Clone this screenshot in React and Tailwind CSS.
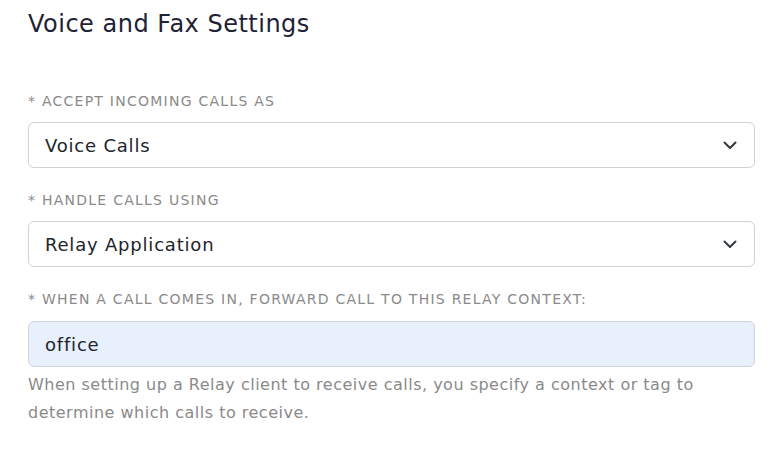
import { useState } from "react";

const font = { fontFamily: '"DejaVu Sans", sans-serif' };

function Chevron() {
  return (
    <svg width="16" height="16" viewBox="0 0 16 16" className="text-[#343a40]">
      <path d="M2.5 5.5l5.5 5.5 5.5-5.5" fill="none" stroke="currentColor" strokeWidth="2" strokeLinecap="round" strokeLinejoin="round" />
    </svg>
  );
}

function Label({ children, className = "" }) {
  return (
    <div className={`h-[21px] text-[14px] leading-[21px] tracking-[1.25px] text-[#8a8a8a] uppercase ${className}`}>
      {children}
    </div>
  );
}

function Field({ label, children }) {
  return (
    <div className="mb-[22px]">
      <Label className="mb-[10px]">{label}</Label>
      {children}
    </div>
  );
}

function Select({ value }) {
  return (
    <div className="h-[46px] flex items-center justify-between px-[16px] border border-[#ced4da] rounded-[6px] bg-white text-[18px] tracking-[0.8px] text-[#212529]">
      <span>{value}</span>
      <Chevron />
    </div>
  );
}

export default function App() {
  const [context, setContext] = useState("office");

  return (
    <div className="w-[775px] h-[459px] bg-white pl-[28px] pr-[20px] pt-[6px] overflow-hidden" style={font}>
      <h2 className="text-[24px] leading-[36px] tracking-[0.5px] text-[#1e2235] mb-[49px]">Voice and Fax Settings</h2>

      <Field label="* Accept incoming calls as">
        <Select value="Voice Calls" />
      </Field>

      <Field label="* Handle calls using">
        <Select value="Relay Application" />
      </Field>

      <div>
        <Label className="mb-[11px]">* When a call comes in, forward call to this relay context:</Label>
        <input
          value={context}
          onChange={(e) => setContext(e.target.value)}
          className="w-full h-[46px] px-[16px] border border-[#ced4da] rounded-[6px] bg-[#e8f0fe] text-[18px] tracking-[0.8px] text-[#212529] outline-none"
          style={font}
        />
        <p className="mt-[4px] text-[16px] leading-[28px] tracking-[0.5px] text-[#8a8a8a]">
          When setting up a Relay client to receive calls, you specify a context or tag to determine which calls to receive.
        </p>
      </div>
    </div>
  );
}
